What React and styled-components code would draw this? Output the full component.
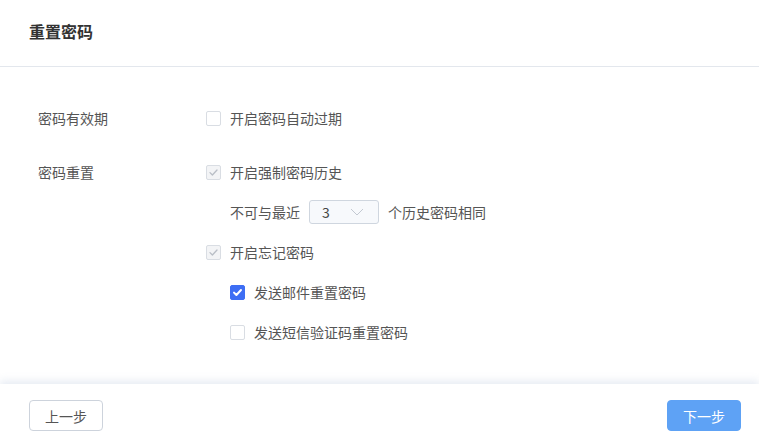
import React from "react";
import styled, { createGlobalStyle } from "styled-components";

const Global = createGlobalStyle`
  html, body { margin: 0; padding: 0; background: #fff; }
  body { font-family: "Noto Sans CJK SC", "Noto Sans", sans-serif; }
  #root { height: 444px; }
`;

const Page = styled.div`
  height: 444px;
  display: flex;
  flex-direction: column;
  background: #fff;
`;

const Header = styled.div`
  height: 66px;
  border-bottom: 1px solid #e3e7ed;
  display: flex;
  align-items: center;
  padding-left: 29px;
  box-sizing: content-box;
`;

const Title = styled.h1`
  margin: 0;
  font-size: 16px;
  font-weight: 700;
  color: #333;
  margin-top: -4px;
`;

const Body = styled.div`
  flex: 1;
  padding: 31px 0 0 38px;
  display: flex;
  flex-direction: column;
  gap: 14px;
`;

const Group = styled.div`
  display: flex;
`;

const Label = styled.div`
  width: 168px;
  height: 40px;
  line-height: 40px;
  font-size: 14px;
  color: #555;
`;

const Items = styled.div`
  display: flex;
  flex-direction: column;
`;

const Line = styled.div`
  height: 40px;
  display: flex;
  align-items: center;
  padding-left: ${(p) => p.$indent || 0}px;
  font-size: 14px;
  color: #555;
`;

const Box = styled.span`
  width: 15px;
  height: 15px;
  box-sizing: border-box;
  border-radius: 2px;
  border: 1px solid ${(p) => (p.$state === "on" ? "#3e6ef4" : "#d9dde3")};
  background: ${(p) =>
    p.$state === "on" ? "#3e6ef4" : p.$state === "disabled" ? "#f3f4f6" : "#fff"};
  display: inline-flex;
  align-items: center;
  justify-content: center;
  margin-right: 9px;
  flex-shrink: 0;
`;

const Check = ({ state }) => (
  <Box $state={state}>
    {state !== "off" && (
      <svg width="11" height="11" viewBox="0 0 11 11">
        <path
          d="M2 5.6 L4.4 8 L9 3"
          fill="none"
          stroke={state === "on" ? "#fff" : "#b9bec6"}
          strokeWidth={state === "on" ? 2 : 1.3}
          strokeLinecap="round"
          strokeLinejoin="round"
        />
      </svg>
    )}
  </Box>
);

const Select = styled.div`
  width: 70px;
  height: 24px;
  box-sizing: border-box;
  margin: 0 9px;
  border: 1px solid #cfd6df;
  border-radius: 3px;
  background: #f7f9fc;
  display: flex;
  align-items: center;
  justify-content: space-between;
  padding: 0 14px 0 12px;
  color: #444;
  font-size: 14px;
`;

const Footer = styled.div`
  height: 60px;
  display: flex;
  align-items: center;
  justify-content: space-between;
  padding: 0 18px 0 29px;
  box-shadow: 0 -3px 8px rgba(200, 210, 228, 0.45);
  background: #fff;
`;

const Button = styled.button`
  width: 74px;
  height: 31px;
  box-sizing: border-box;
  border-radius: 4px;
  border: 1px solid ${(p) => (p.$primary ? "#5ea2f5" : "#cdd3dc")};
  background: ${(p) => (p.$primary ? "#5ea2f5" : "#fff")};
  color: ${(p) => (p.$primary ? "#fff" : "#555")};
  font-family: "Noto Sans CJK SC", sans-serif;
  font-size: 14px;
  padding: 0;
  margin-top: 3px;
`;

export default function App() {
  return (
    <Page>
      <Global />
      <Header>
        <Title>重置密码</Title>
      </Header>
      <Body>
        <Group>
          <Label>密码有效期</Label>
          <Items>
            <Line>
              <Check state="off" />
              开启密码自动过期
            </Line>
          </Items>
        </Group>
        <Group>
          <Label>密码重置</Label>
          <Items>
            <Line>
              <Check state="disabled" />
              开启强制密码历史
            </Line>
            <Line $indent={24}>
              不可与最近
              <Select>
                <span>3</span>
                <svg width="14" height="8" viewBox="0 0 14 8">
                  <path d="M1 1 L7 7 L13 1" fill="none" stroke="#c3c9d2" strokeWidth="1" />
                </svg>
              </Select>
              个历史密码相同
            </Line>
            <Line>
              <Check state="disabled" />
              开启忘记密码
            </Line>
            <Line $indent={24}>
              <Check state="on" />
              发送邮件重置密码
            </Line>
            <Line $indent={24}>
              <Check state="off" />
              发送短信验证码重置密码
            </Line>
          </Items>
        </Group>
      </Body>
      <Footer>
        <Button>上一步</Button>
        <Button $primary>下一步</Button>
      </Footer>
    </Page>
  );
}
